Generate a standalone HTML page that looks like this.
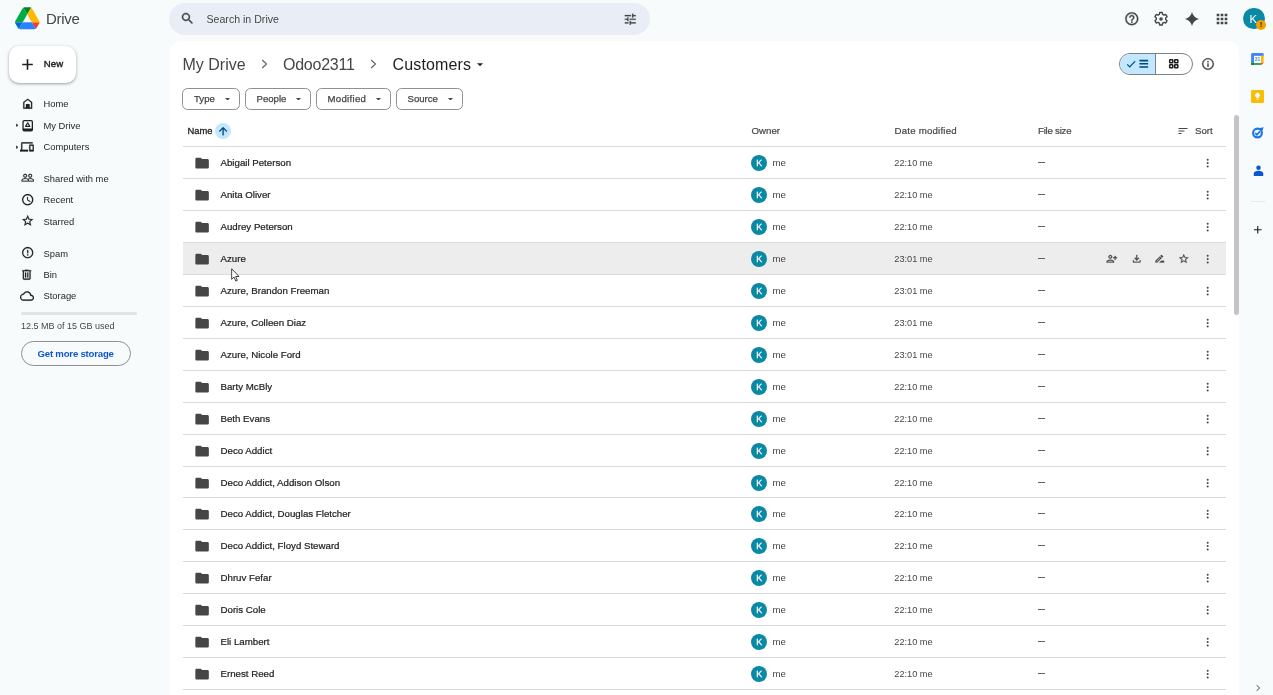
<!DOCTYPE html>
<html lang="en">
<head>
<meta charset="utf-8">
<title>Customers - Google Drive</title>
<style>
*{box-sizing:border-box;margin:0;padding:0}
html,body{width:1273px;height:695px;overflow:hidden;background:#f7fbfc;font-family:"Liberation Sans",Arial,sans-serif;color:#1f1f1f}
body{position:relative}
#wrap{position:absolute;left:0;top:0;width:1273px;height:695px;will-change:transform}
.abs{position:absolute}
svg{position:absolute;display:block}
.t{position:absolute;white-space:nowrap;line-height:1}
/* top bar */
#logo{left:15px;top:7px;width:24.500px;height:22.500px}
#drive{left:46px;top:11.400px;font-size:15px;color:#444746;letter-spacing:-0.3px}
#search{left:168.500px;top:3px;width:481px;height:32px;border-radius:16px;background:#e9eef6}
#searchtxt{left:206.500px;top:13.500px;font-size:10.600px;color:#444746}
.hi{fill:#444746}
/* new button */
#new{left:9px;top:46px;width:67px;height:36.500px;border-radius:10px;background:#fff;box-shadow:0 1px 2px rgba(60,64,67,.3),0 1px 3px 1px rgba(60,64,67,.15)}
#newtxt{left:43.700px;top:59.200px;font-size:9.600px;color:#1f1f1f;-webkit-text-stroke:.4px #1f1f1f;letter-spacing:0.1px}
/* sidebar */
.sb{font-size:9.400px;color:#1f1f1f;left:43.500px}
.si{stroke:#1f1f1f;stroke-width:.35;fill:#1f1f1f;width:13.400px;height:13.400px;left:20.500px}
#bar{left:21px;top:311.500px;width:116px;height:3px;border-radius:2px;background:#dfe3e7}
#used{left:21px;top:321.600px;font-size:9px;color:#444746}
#more{left:20.500px;top:341px;width:110.500px;height:25px;border:1px solid #8e918f;border-radius:13px}
#moretxt{left:37.500px;top:348.500px;font-size:9.600px;color:#0b57d0;font-weight:bold;letter-spacing:-0.2px}
/* main panel */
#main{left:170px;top:41px;width:1069px;height:660px;background:#fff;border-radius:11px 11px 0 0}
.bc{font-size:16px;color:#444746;top:57px}
.chip{position:absolute;top:88px;height:21.500px;border:1px solid #8e918f;border-radius:5.500px}
.ct{font-size:9.600px;color:#444746;top:94px;-webkit-text-stroke:0.25px #444746}
.car{fill:#444746}
.hd{font-size:9.700px;color:#444746;top:126px;-webkit-text-stroke:.2px #444746}
/* rows */
.row{position:absolute;left:183px;width:1042.500px;height:32.500px;border-top:1px solid #dadada}
.row.hov{background:#ededed}
.row.last{height:1px}
.fold{left:10.650px;top:7.600px;width:16.200px;height:16.200px;fill:#444746}
.row span{position:absolute;white-space:nowrap;line-height:1;font-size:9.700px}
.nm{left:37.500px;top:10.500px;color:#1f1f1f;-webkit-text-stroke:0.22px #1f1f1f}
.av{left:568.100px;top:7.700px;width:16.300px;height:16.300px;border-radius:50%;background:#0a89a6;color:#fff;font-size:8.800px!important;-webkit-text-stroke:.3px #fff;text-align:center;line-height:17px!important}
.me{left:589.500px;top:11.300px;color:#444746}
.dt{left:711.300px;top:11.500px;color:#444746;font-size:9.200px!important}
.sz{left:855px;top:15px;width:7.300px;height:1px;background:#5f6368}
.dots{left:1023px;top:10.500px;width:3.400px;height:10.200px;fill:#444746}
.act{top:9.500px;width:11.500px;height:11.500px;fill:#444746;stroke:#444746;stroke-width:.5}
/* scrollbar */
#scroll{left:1234px;top:114.500px;width:5px;height:200.500px;border-radius:3px;background:#c4c4c4}
</style>
</head>
<body>
<div id="wrap">
<!-- ===== top bar ===== -->
<svg id="logo" viewBox="0 0 87.300 78">
<path d="m6.600 66.850 3.850 6.650c.8 1.400 1.950 2.500 3.300 3.300l13.750-23.800h-27.500c0 1.550.4 3.100 1.200 4.500z" fill="#0066da"/>
<path d="m43.650 25-13.750-23.800c-1.350.8-2.500 1.900-3.300 3.300l-25.400 44a9.060 9.060 0 0 0 -1.200 4.500h27.500z" fill="#00ac47"/>
<path d="m73.550 76.800c1.350-.8 2.500-1.900 3.300-3.300l1.600-2.750 7.650-13.250c.8-1.400 1.200-2.950 1.200-4.500h-27.502l5.852 11.500z" fill="#ea4335"/>
<path d="m43.650 25 13.750-23.800c-1.350-.8-2.900-1.200-4.500-1.200h-18.500c-1.600 0-3.150.45-4.500 1.200z" fill="#00832d"/>
<path d="m59.800 53h-32.300l-13.750 23.800c1.350.8 2.900 1.200 4.500 1.200h50.800c1.600 0 3.150-.45 4.500-1.200z" fill="#2684fc"/>
<path d="m73.400 26.500-12.700-22c-.8-1.400-1.950-2.500-3.300-3.300l-13.750 23.800 16.150 28h27.450c0-1.550-.4-3.100-1.200-4.500z" fill="#ffba00"/>
</svg>
<div class="t" id="drive">Drive</div>
<div class="abs" id="search"></div>
<svg class="hi" style="left:180px;top:11.400px;width:15px;height:15px;stroke:#444746;stroke-width:.6" viewBox="0 0 24 24"><path d="M15.500 14h-.79l-.28-.27C15.410 12.590 16 11.110 16 9.500 16 5.910 13.090 3 9.500 3S3 5.910 3 9.500 5.910 16 9.500 16c1.610 0 3.090-.59 4.230-1.570l.27.280v.79l5 4.990L20.490 19l-4.990-5zm-6 0C7.010 14 5 11.990 5 9.500S7.010 5 9.500 5 14 7.010 14 9.500 11.990 14 9.500 14z"/></svg>
<div class="t" id="searchtxt">Search in Drive</div>
<svg class="hi" style="left:622.500px;top:12px;width:14.500px;height:14.500px;stroke:#444746;stroke-width:.4" viewBox="0 0 24 24"><path d="M3 17v2h6v-2H3zM3 5v2h10V5H3zm10 16v-2h8v-2h-8v-2h-2v6h2zM7 9v2H3v2h4v2h2V9H7zm14 4v-2H11v2h10zm-6-4h2V7h4V5h-4V3h-2v6z"/></svg>
<!-- right icons -->
<svg class="hi" style="left:1123.600px;top:11.100px;width:15.600px;height:15.600px;stroke:#444746;stroke-width:.5" viewBox="0 0 24 24"><path d="M11 18h2v-2h-2v2zm1-16C6.480 2 2 6.480 2 12s4.480 10 10 10 10-4.480 10-10S17.520 2 12 2zm0 18c-4.410 0-8-3.590-8-8s3.590-8 8-8 8 3.590 8 8-3.590 8-8 8zm0-14c-2.210 0-4 1.790-4 4h2c0-1.100.9-2 2-2s2 .9 2 2c0 2-3 1.750-3 5h2c0-2.250 3-2.500 3-5 0-2.210-1.790-4-4-4z"/></svg>
<svg style="left:1152.800px;top:10.900px;width:16px;height:16px" viewBox="-12 -12 24 24"><g fill="none" stroke="#444746" stroke-width="2.100" stroke-linejoin="round"><path d="M-1.900 -9.800h3.800l.55 2.750 2.100 1.200 2.650-.9 1.900 3.300-2.100 1.850v2.400l2.100 1.850-1.900 3.300-2.650-.9-2.100 1.200-.55 2.750h-3.800l-.55-2.750-2.100-1.200-2.650.9-1.900-3.300 2.100-1.850v-2.400l-2.100-1.850 1.900-3.300 2.650.9 2.100-1.200z"/></g><circle r="2.700" fill="#444746"/></svg>
<svg style="left:1185.200px;top:12.100px;width:14px;height:14px;fill:#444746" viewBox="0 0 24 24"><path d="M12 0C13.500 6.500 17.500 10.500 24 12 17.500 13.500 13.500 17.500 12 24 10.500 17.500 6.500 13.500 0 12 6.500 10.500 10.500 6.500 12 0z"/></svg>
<svg class="hi" style="left:1214.200px;top:10.900px;width:16px;height:16px" viewBox="0 0 24 24"><path d="M4 8h4V4H4v4zm6 12h4v-4h-4v4zm-6 0h4v-4H4v4zm0-6h4v-4H4v4zm6 0h4v-4h-4v4zm6-10v4h4V4h-4zm-6 4h4V4h-4v4zm6 6h4v-4h-4v4zm0 6h4v-4h-4v4z"/></svg>
<div class="abs" style="left:1243.200px;top:8px;width:21.400px;height:21.400px;border-radius:50%;background:#0a89a6"></div>
<div class="t" style="left:1249.500px;top:14.300px;font-size:11.300px;color:#fff">K</div>
<div class="abs" style="left:1256.100px;top:19.800px;width:10px;height:10px;border-radius:50%;background:#f2a000"></div>
<div class="t" style="left:1259.800px;top:20.800px;font-size:8px;font-weight:bold;color:#3c2a00">!</div>

<!-- ===== sidebar ===== -->
<div class="abs" id="new"></div>
<svg style="left:20px;top:56.500px;width:15px;height:15px;fill:#1f1f1f" viewBox="0 0 24 24"><path d="M20.500 13.300h-7.200v7.200h-2.600v-7.200H3.500v-2.600h7.200V3.500h2.600v7.200h7.200z"/></svg>
<div class="t" id="newtxt">New</div>

<svg class="si" style="top:96.9px" viewBox="0 0 24 24"><path d="M12 3L4 9v12h16V9l-8-6zm6 16h-3v-6H9v6H6v-9l6-4.500 6 4.500v9z"/><rect x="9" y="13" width="6" height="7"/></svg>
<div class="t sb" style="top:98.500px">Home</div>
<svg style="left:15.500px;top:123.400px;width:2.800px;height:4.400px;fill:#444746" viewBox="0 0 4 5"><path d="M0 0l4 2.500L0 5z"/></svg>
<svg class="si" style="top:118.700px;left:20.600px;stroke:none" viewBox="0 0 24 24"><rect x="3.650" y="2.850" width="16.700" height="18.300" rx="2.200" fill="none" stroke="#1f1f1f" stroke-width="2.300"/><rect x="3.650" y="17" width="16.700" height="4.200" fill="#1f1f1f"/><path d="M12 6.600l3.900 6.600H8.100z" fill="none" stroke="#1f1f1f" stroke-width="1.900" stroke-linejoin="round"/></svg>
<div class="t sb" style="top:121px">My Drive</div>
<svg style="left:15.500px;top:144.900px;width:2.800px;height:4.400px;fill:#444746" viewBox="0 0 4 5"><path d="M0 0l4 2.500L0 5z"/></svg>
<svg class="si" style="top:139.600px;left:20.400px;width:13.800px;height:13.800px" viewBox="0 0 24 24"><path d="M4 6h18V4H4c-1.100 0-2 .9-2 2v11H0v3h14v-3H4V6zm19 2h-6c-.55 0-1 .45-1 1v10c0 .55.450 1 1 1h6c.55 0 1-.45 1-1V9c0-.55-.45-1-1-1zm-1 9h-4v-7h4v7z"/></svg>
<div class="t sb" style="top:141.500px">Computers</div>

<svg class="si" style="top:171.4px" viewBox="0 0 24 24"><path d="M16.500 13c-1.200 0-3.070.34-4.500 1-1.430-.67-3.300-1-4.500-1C5.330 13 1 14.080 1 16.250V19h22v-2.750c0-2.170-4.330-3.250-6.500-3.250zm-4 4.500h-10v-1.250c0-.54 2.560-1.750 5-1.750s5 1.210 5 1.750v1.250zm9 0H14v-1.250c0-.46-.2-.86-.52-1.220.88-.3 1.960-.53 3.020-.53 2.440 0 5 1.210 5 1.750v1.250zM7.500 12c1.930 0 3.500-1.570 3.500-3.500S9.430 5 7.500 5 4 6.570 4 8.500 5.570 12 7.500 12zm0-5.500c1.100 0 2 .9 2 2s-.9 2-2 2-2-.9-2-2 .9-2 2-2zm9 5.500c1.930 0 3.500-1.570 3.500-3.500S18.430 5 16.500 5 13 6.570 13 8.500s1.570 3.500 3.500 3.500zm0-5.500c1.100 0 2 .9 2 2s-.9 2-2 2-2-.9-2-2 .9-2 2-2z"/></svg>
<div class="t sb" style="top:174px">Shared with me</div>
<svg class="si" style="top:192.9px" viewBox="0 0 24 24"><path d="M11.990 2C6.470 2 2 6.480 2 12s4.470 10 9.990 10C17.520 22 22 17.520 22 12S17.520 2 11.990 2zM12 20c-4.420 0-8-3.580-8-8s3.580-8 8-8 8 3.580 8 8-3.580 8-8 8zm.5-13H11v6l5.250 3.150.75-1.230-4.500-2.670z"/></svg>
<div class="t sb" style="top:194.500px">Recent</div>
<svg class="si" style="top:213.9px" viewBox="0 0 24 24"><path d="M22 9.240l-7.190-.62L12 2 9.190 8.630 2 9.240l5.460 4.730L5.820 21 12 17.270 18.180 21l-1.630-7.030L22 9.240zM12 15.400l-3.760 2.270 1-4.280-3.320-2.880 4.380-.38L12 6.100l1.710 4.040 4.380.38-3.320 2.880 1 4.280L12 15.400z"/></svg>
<div class="t sb" style="top:216.500px">Starred</div>

<svg class="si" style="top:245.9px" viewBox="0 0 24 24"><path d="M11 15h2v2h-2zm0-8h2v6h-2zm.99-5C6.470 2 2 6.480 2 12s4.470 10 9.990 10C17.520 22 22 17.520 22 12S17.520 2 11.990 2zM12 20c-4.420 0-8-3.580-8-8s3.580-8 8-8 8 3.580 8 8-3.580 8-8 8z"/></svg>
<div class="t sb" style="top:248.500px">Spam</div>
<svg class="si" style="top:268.200px;left:20.300px" viewBox="0 0 24 24"><path d="M15 4V3H9v1H4v2h1v13c0 1.100.9 2 2 2h10c1.100 0 2-.9 2-2V6h1V4h-5zm2 15H7V6h10v13zM9 8h2v9H9zm4 0h2v9h-2z"/></svg>
<div class="t sb" style="top:270px">Bin</div>
<svg class="si" style="top:289px;left:20.300px;width:14px;height:14px" viewBox="0 0 24 24"><path d="M19.350 10.040C18.670 6.590 15.640 4 12 4 9.110 4 6.600 5.640 5.350 8.040 2.340 8.360 0 10.910 0 14c0 3.310 2.690 6 6 6h13c2.760 0 5-2.240 5-5 0-2.640-2.050-4.780-4.650-4.960zM19 18H6c-2.210 0-4-1.790-4-4 0-2.050 1.530-3.760 3.560-3.970l1.070-.11.5-.95C8.080 7.140 9.940 6 12 6c2.620 0 4.880 1.860 5.390 4.430l.3 1.500 1.530.11c1.560.1 2.780 1.410 2.780 2.960 0 1.650-1.350 3-3 3z"/></svg>
<div class="t sb" style="top:290.500px">Storage</div>

<div class="abs" id="bar"></div>
<div class="t" id="used">12.5 MB of 15 GB used</div>
<div class="abs" id="more"></div>
<div class="t" id="moretxt">Get more storage</div>

<!-- ===== main panel ===== -->
<div class="abs" id="main"></div>
<div class="t bc" style="left:182.500px">My Drive</div>
<svg style="left:261px;top:59.300px;width:7px;height:10px;fill:none;stroke:#5f6368;stroke-width:1.150" viewBox="0 0 7 10"><path d="M1.200 1l4.300 4-4.300 4"/></svg>
<div class="t bc" style="left:283px;letter-spacing:-0.25px">Odoo2311</div>
<svg style="left:370.200px;top:59.300px;width:7px;height:10px;fill:none;stroke:#5f6368;stroke-width:1.150" viewBox="0 0 7 10"><path d="M1.200 1l4.300 4-4.300 4"/></svg>
<div class="t bc" style="left:392.500px;color:#1f1f1f;letter-spacing:0.15px">Customers</div>
<svg style="left:477px;top:62.800px;width:6.200px;height:3.400px;fill:#1f1f1f" viewBox="0 0 10 5"><path d="M0 0h10L5 5z"/></svg>

<!-- view toggle -->
<div class="abs" style="left:1118.600px;top:53px;width:74px;height:22px;border:1px solid #7c8185;border-radius:11px;overflow:hidden"><div class="abs" style="left:0;top:0;width:36.500px;height:20px;background:#c2e7ff;border-right:1px solid #7c8185"></div></div>
<svg style="left:1125.800px;top:59px;width:10px;height:10px;fill:none;stroke:#004a77;stroke-width:2.800" viewBox="0 0 24 24"><path d="M3 13l6 6L22 5"/></svg>
<svg style="left:1138.300px;top:58.200px;width:11.600px;height:11.600px;fill:#004a77" viewBox="0 0 24 24"><path d="M3 3.800h18v3.200H3zm0 6.600h18v3.200H3zm0 6.600h18v3.200H3z"/></svg>
<svg style="left:1167.500px;top:58.100px;width:11.500px;height:11.500px;fill:none;stroke:#1f1f1f;stroke-width:3.200" viewBox="0 0 24 24"><rect x="3.500" y="3.500" width="6.500" height="6.500" rx="1"/><rect x="14" y="3.500" width="6.500" height="6.500" rx="1"/><rect x="3.500" y="14" width="6.500" height="6.500" rx="1"/><rect x="14" y="14" width="6.500" height="6.500" rx="1"/></svg>
<svg class="hi" style="left:1201px;top:57.200px;width:14px;height:14px;stroke:#444746;stroke-width:.5" viewBox="0 0 24 24"><path d="M11 7h2v2h-2zm0 4h2v6h-2zm1-9C6.480 2 2 6.480 2 12s4.480 10 10 10 10-4.480 10-10S17.520 2 12 2zm0 18c-4.410 0-8-3.590-8-8s3.590-8 8-8 8 3.590 8 8-3.590 8-8 8z"/></svg>

<!-- chips -->
<div class="chip" style="left:182px;width:58px"></div>
<div class="t ct" style="left:194px">Type</div>
<svg class="car" style="left:225px;top:97.500px;width:5px;height:2.700px" viewBox="0 0 10 5"><path d="M0 0h10L5 5z"/></svg>
<div class="chip" style="left:245px;width:66px"></div>
<div class="t ct" style="left:256.500px">People</div>
<svg class="car" style="left:296px;top:97.500px;width:5px;height:2.700px" viewBox="0 0 10 5"><path d="M0 0h10L5 5z"/></svg>
<div class="chip" style="left:316px;width:75px"></div>
<div class="t ct" style="left:327.500px;letter-spacing:0.3px">Modified</div>
<svg class="car" style="left:376px;top:97.500px;width:5px;height:2.700px" viewBox="0 0 10 5"><path d="M0 0h10L5 5z"/></svg>
<div class="chip" style="left:396px;width:67px"></div>
<div class="t ct" style="left:407.500px">Source</div>
<svg class="car" style="left:448px;top:97.500px;width:5px;height:2.700px" viewBox="0 0 10 5"><path d="M0 0h10L5 5z"/></svg>

<!-- column headers -->
<div class="t hd" style="left:187.500px;color:#1f1f1f;font-size:9.400px;-webkit-text-stroke:0.3px #1f1f1f">Name</div>
<div class="abs" style="left:215px;top:123px;width:16px;height:16px;border-radius:50%;background:#c2e7ff"></div>
<svg style="left:216.900px;top:124.800px;width:12.200px;height:12.200px;fill:#004a77;stroke:#004a77;stroke-width:.7" viewBox="0 0 24 24"><path d="M4 12l1.410 1.410L11 7.830V20h2V7.830l5.580 5.590L20 12l-8-8-8 8z"/></svg>
<div class="t hd" style="left:751.500px">Owner</div>
<div class="t hd" style="left:894.500px;letter-spacing:0.2px">Date modified</div>
<div class="t hd" style="left:1038px;letter-spacing:-0.25px">File size</div>
<svg class="hi" style="left:1177px;top:125px;width:12px;height:12px" viewBox="0 0 24 24"><path d="M3 18h6v-2H3v2zM3 6v2h18V6H3zm0 7h12v-2H3v2z"/></svg>
<div class="t hd" style="left:1195px">Sort</div>

<div class="row" style="top:146px"><svg class="fold" viewBox="0 0 24 24"><path d="M10 4H4c-1.1 0-2 .9-2 2v12c0 1.100.9 2 2 2h16c1.100 0 2-.9 2-2V8c0-1.100-.9-2-2-2h-8l-2-2z"/></svg><span class="nm">Abigail Peterson</span><span class="av">K</span><span class="me">me</span><span class="dt">22:10 me</span><span class="sz"></span><svg class="dots" viewBox="0 0 4 12"><circle cx="2" cy="2" r="1.2"/><circle cx="2" cy="6" r="1.2"/><circle cx="2" cy="10" r="1.2"/></svg></div>
<div class="row" style="top:178px"><svg class="fold" viewBox="0 0 24 24"><path d="M10 4H4c-1.1 0-2 .9-2 2v12c0 1.100.9 2 2 2h16c1.100 0 2-.9 2-2V8c0-1.100-.9-2-2-2h-8l-2-2z"/></svg><span class="nm">Anita Oliver</span><span class="av">K</span><span class="me">me</span><span class="dt">22:10 me</span><span class="sz"></span><svg class="dots" viewBox="0 0 4 12"><circle cx="2" cy="2" r="1.2"/><circle cx="2" cy="6" r="1.2"/><circle cx="2" cy="10" r="1.2"/></svg></div>
<div class="row" style="top:210px"><svg class="fold" viewBox="0 0 24 24"><path d="M10 4H4c-1.1 0-2 .9-2 2v12c0 1.100.9 2 2 2h16c1.100 0 2-.9 2-2V8c0-1.100-.9-2-2-2h-8l-2-2z"/></svg><span class="nm">Audrey Peterson</span><span class="av">K</span><span class="me">me</span><span class="dt">22:10 me</span><span class="sz"></span><svg class="dots" viewBox="0 0 4 12"><circle cx="2" cy="2" r="1.2"/><circle cx="2" cy="6" r="1.2"/><circle cx="2" cy="10" r="1.2"/></svg></div>
<div class="row hov" style="top:242px"><svg class="fold" viewBox="0 0 24 24"><path d="M10 4H4c-1.1 0-2 .9-2 2v12c0 1.100.9 2 2 2h16c1.100 0 2-.9 2-2V8c0-1.100-.9-2-2-2h-8l-2-2z"/></svg><span class="nm">Azure</span><span class="av">K</span><span class="me">me</span><span class="dt">23:01 me</span><span class="sz"></span><svg class="act" style="left:923.400px" viewBox="0 0 24 24"><path d="M9 12c2.210 0 4-1.790 4-4s-1.790-4-4-4-4 1.790-4 4 1.790 4 4 4zm0-6c1.100 0 2 .9 2 2s-.9 2-2 2-2-.9-2-2 .9-2 2-2zm0 8c-2.670 0-8 1.340-8 4v2h16v-2c0-2.660-5.330-4-8-4zm6 4H3v-.01C3.200 17.290 6.300 16 9 16s5.800 1.290 6 2zM20 9V6h-2v3h-3v2h3v3h2v-3h3V9h-3z"/></svg>
<svg class="act" style="left:947.500px" viewBox="0 0 24 24"><path d="M18 15v3H6v-3H4v3c0 1.100.9 2 2 2h12c1.100 0 2-.9 2-2v-3h-2zm-1-4l-1.410-1.410L13 12.170V4h-2v8.170L8.410 9.590 7 11l5 5 5-5z"/></svg>
<svg class="act" style="left:971.300px" viewBox="0 0 24 24"><path d="M15 16l-4 4h10v-4h-6zM12.060 7.190L3 16.250V20h3.750l9.060-9.060-3.750-3.750zM5.920 18H5v-.92l7.060-7.060.92.920L5.920 18zM18.710 8.040c.39-.39.39-1.020 0-1.410l-2.340-2.340c-.2-.2-.45-.29-.71-.29-.25 0-.51.100-.7.290l-1.830 1.830 3.750 3.750 1.830-1.830z"/></svg>
<svg class="act" style="left:995.300px" viewBox="0 0 24 24"><path d="M22 9.240l-7.190-.62L12 2 9.190 8.630 2 9.240l5.460 4.730L5.820 21 12 17.270 18.180 21l-1.630-7.030L22 9.240zM12 15.400l-3.760 2.270 1-4.280-3.320-2.880 4.380-.38L12 6.100l1.710 4.040 4.380.38-3.320 2.880 1 4.280L12 15.400z"/></svg><svg class="dots" viewBox="0 0 4 12"><circle cx="2" cy="2" r="1.2"/><circle cx="2" cy="6" r="1.2"/><circle cx="2" cy="10" r="1.2"/></svg></div>
<div class="row" style="top:274px"><svg class="fold" viewBox="0 0 24 24"><path d="M10 4H4c-1.1 0-2 .9-2 2v12c0 1.100.9 2 2 2h16c1.100 0 2-.9 2-2V8c0-1.100-.9-2-2-2h-8l-2-2z"/></svg><span class="nm">Azure, Brandon Freeman</span><span class="av">K</span><span class="me">me</span><span class="dt">23:01 me</span><span class="sz"></span><svg class="dots" viewBox="0 0 4 12"><circle cx="2" cy="2" r="1.2"/><circle cx="2" cy="6" r="1.2"/><circle cx="2" cy="10" r="1.2"/></svg></div>
<div class="row" style="top:306px"><svg class="fold" viewBox="0 0 24 24"><path d="M10 4H4c-1.1 0-2 .9-2 2v12c0 1.100.9 2 2 2h16c1.100 0 2-.9 2-2V8c0-1.100-.9-2-2-2h-8l-2-2z"/></svg><span class="nm">Azure, Colleen Diaz</span><span class="av">K</span><span class="me">me</span><span class="dt">23:01 me</span><span class="sz"></span><svg class="dots" viewBox="0 0 4 12"><circle cx="2" cy="2" r="1.2"/><circle cx="2" cy="6" r="1.2"/><circle cx="2" cy="10" r="1.2"/></svg></div>
<div class="row" style="top:338px"><svg class="fold" viewBox="0 0 24 24"><path d="M10 4H4c-1.1 0-2 .9-2 2v12c0 1.100.9 2 2 2h16c1.100 0 2-.9 2-2V8c0-1.100-.9-2-2-2h-8l-2-2z"/></svg><span class="nm">Azure, Nicole Ford</span><span class="av">K</span><span class="me">me</span><span class="dt">23:01 me</span><span class="sz"></span><svg class="dots" viewBox="0 0 4 12"><circle cx="2" cy="2" r="1.2"/><circle cx="2" cy="6" r="1.2"/><circle cx="2" cy="10" r="1.2"/></svg></div>
<div class="row" style="top:370px"><svg class="fold" viewBox="0 0 24 24"><path d="M10 4H4c-1.1 0-2 .9-2 2v12c0 1.100.9 2 2 2h16c1.100 0 2-.9 2-2V8c0-1.100-.9-2-2-2h-8l-2-2z"/></svg><span class="nm">Barty McBly</span><span class="av">K</span><span class="me">me</span><span class="dt">22:10 me</span><span class="sz"></span><svg class="dots" viewBox="0 0 4 12"><circle cx="2" cy="2" r="1.2"/><circle cx="2" cy="6" r="1.2"/><circle cx="2" cy="10" r="1.2"/></svg></div>
<div class="row" style="top:402px"><svg class="fold" viewBox="0 0 24 24"><path d="M10 4H4c-1.1 0-2 .9-2 2v12c0 1.100.9 2 2 2h16c1.100 0 2-.9 2-2V8c0-1.100-.9-2-2-2h-8l-2-2z"/></svg><span class="nm">Beth Evans</span><span class="av">K</span><span class="me">me</span><span class="dt">22:10 me</span><span class="sz"></span><svg class="dots" viewBox="0 0 4 12"><circle cx="2" cy="2" r="1.2"/><circle cx="2" cy="6" r="1.2"/><circle cx="2" cy="10" r="1.2"/></svg></div>
<div class="row" style="top:434px"><svg class="fold" viewBox="0 0 24 24"><path d="M10 4H4c-1.1 0-2 .9-2 2v12c0 1.100.9 2 2 2h16c1.100 0 2-.9 2-2V8c0-1.100-.9-2-2-2h-8l-2-2z"/></svg><span class="nm">Deco Addict</span><span class="av">K</span><span class="me">me</span><span class="dt">22:10 me</span><span class="sz"></span><svg class="dots" viewBox="0 0 4 12"><circle cx="2" cy="2" r="1.2"/><circle cx="2" cy="6" r="1.2"/><circle cx="2" cy="10" r="1.2"/></svg></div>
<div class="row" style="top:466px"><svg class="fold" viewBox="0 0 24 24"><path d="M10 4H4c-1.1 0-2 .9-2 2v12c0 1.100.9 2 2 2h16c1.100 0 2-.9 2-2V8c0-1.100-.9-2-2-2h-8l-2-2z"/></svg><span class="nm">Deco Addict, Addison Olson</span><span class="av">K</span><span class="me">me</span><span class="dt">22:10 me</span><span class="sz"></span><svg class="dots" viewBox="0 0 4 12"><circle cx="2" cy="2" r="1.2"/><circle cx="2" cy="6" r="1.2"/><circle cx="2" cy="10" r="1.2"/></svg></div>
<div class="row" style="top:497px"><svg class="fold" viewBox="0 0 24 24"><path d="M10 4H4c-1.1 0-2 .9-2 2v12c0 1.100.9 2 2 2h16c1.100 0 2-.9 2-2V8c0-1.100-.9-2-2-2h-8l-2-2z"/></svg><span class="nm">Deco Addict, Douglas Fletcher</span><span class="av">K</span><span class="me">me</span><span class="dt">22:10 me</span><span class="sz"></span><svg class="dots" viewBox="0 0 4 12"><circle cx="2" cy="2" r="1.2"/><circle cx="2" cy="6" r="1.2"/><circle cx="2" cy="10" r="1.2"/></svg></div>
<div class="row" style="top:529px"><svg class="fold" viewBox="0 0 24 24"><path d="M10 4H4c-1.1 0-2 .9-2 2v12c0 1.100.9 2 2 2h16c1.100 0 2-.9 2-2V8c0-1.100-.9-2-2-2h-8l-2-2z"/></svg><span class="nm">Deco Addict, Floyd Steward</span><span class="av">K</span><span class="me">me</span><span class="dt">22:10 me</span><span class="sz"></span><svg class="dots" viewBox="0 0 4 12"><circle cx="2" cy="2" r="1.2"/><circle cx="2" cy="6" r="1.2"/><circle cx="2" cy="10" r="1.2"/></svg></div>
<div class="row" style="top:561px"><svg class="fold" viewBox="0 0 24 24"><path d="M10 4H4c-1.1 0-2 .9-2 2v12c0 1.100.9 2 2 2h16c1.100 0 2-.9 2-2V8c0-1.100-.9-2-2-2h-8l-2-2z"/></svg><span class="nm">Dhruv Fefar</span><span class="av">K</span><span class="me">me</span><span class="dt">22:10 me</span><span class="sz"></span><svg class="dots" viewBox="0 0 4 12"><circle cx="2" cy="2" r="1.2"/><circle cx="2" cy="6" r="1.2"/><circle cx="2" cy="10" r="1.2"/></svg></div>
<div class="row" style="top:593px"><svg class="fold" viewBox="0 0 24 24"><path d="M10 4H4c-1.1 0-2 .9-2 2v12c0 1.100.9 2 2 2h16c1.100 0 2-.9 2-2V8c0-1.100-.9-2-2-2h-8l-2-2z"/></svg><span class="nm">Doris Cole</span><span class="av">K</span><span class="me">me</span><span class="dt">22:10 me</span><span class="sz"></span><svg class="dots" viewBox="0 0 4 12"><circle cx="2" cy="2" r="1.2"/><circle cx="2" cy="6" r="1.2"/><circle cx="2" cy="10" r="1.2"/></svg></div>
<div class="row" style="top:625px"><svg class="fold" viewBox="0 0 24 24"><path d="M10 4H4c-1.1 0-2 .9-2 2v12c0 1.100.9 2 2 2h16c1.100 0 2-.9 2-2V8c0-1.100-.9-2-2-2h-8l-2-2z"/></svg><span class="nm">Eli Lambert</span><span class="av">K</span><span class="me">me</span><span class="dt">22:10 me</span><span class="sz"></span><svg class="dots" viewBox="0 0 4 12"><circle cx="2" cy="2" r="1.2"/><circle cx="2" cy="6" r="1.2"/><circle cx="2" cy="10" r="1.2"/></svg></div>
<div class="row" style="top:657px"><svg class="fold" viewBox="0 0 24 24"><path d="M10 4H4c-1.1 0-2 .9-2 2v12c0 1.100.9 2 2 2h16c1.100 0 2-.9 2-2V8c0-1.100-.9-2-2-2h-8l-2-2z"/></svg><span class="nm">Ernest Reed</span><span class="av">K</span><span class="me">me</span><span class="dt">22:10 me</span><span class="sz"></span><svg class="dots" viewBox="0 0 4 12"><circle cx="2" cy="2" r="1.2"/><circle cx="2" cy="6" r="1.2"/><circle cx="2" cy="10" r="1.2"/></svg></div>
<div class="row last" style="top:689px"></div>

<div class="abs" id="scroll"></div>

<!-- cursor -->
<svg style="left:231.400px;top:267.500px;width:9.500px;height:14.500px" viewBox="0 0 10 15"><path d="M0.700 0.700v11l2.500-2.300 1.800 4.200 1.700-.7-1.800-4.100h3.500z" fill="#fff" stroke="#222" stroke-width="0.900" stroke-linejoin="round"/></svg>

<!-- ===== right side panel ===== -->
<svg style="left:1251.300px;top:52.600px;width:12.800px;height:12.600px" viewBox="0 0 24 24"><path d="M0 2.500A2.500 2.500 0 0 1 2.500 0h19A2.500 2.500 0 0 1 24 2.500V6H0z" fill="#4285f4"/><rect x="0" y="5" width="5.500" height="14" fill="#4285f4"/><rect x="18.500" y="5" width="5.500" height="13.500" fill="#fbbc04"/><path d="M5.500 18.500h13V24h-13z" fill="#34a853"/><path d="M0 18.500h5.500V24h-3A2.500 2.500 0 0 1 0 21.500z" fill="#188038"/><path d="M18.500 18.500H24L18.500 24z" fill="#ea4335"/><rect x="5.500" y="5.500" width="13" height="13" fill="#fff"/><text x="12" y="15.700" font-size="9.500" font-weight="bold" text-anchor="middle" fill="#4285f4" font-family="Liberation Sans,sans-serif">31</text></svg>
<svg style="left:1251px;top:89.500px;width:13px;height:13px" viewBox="0 0 24 24"><rect x="0" y="0" width="24" height="24" rx="2.500" fill="#fbbc04"/><path d="M12 5a4.500 4.500 0 0 0-2.500 8.240V15h5v-1.760A4.500 4.500 0 0 0 12 5zm-2 11.500h4V18h-4z" fill="#fff"/></svg>
<svg style="left:1251px;top:126.100px;width:13.500px;height:13.500px" viewBox="0 0 24 24"><circle cx="11.500" cy="12.500" r="7.800" fill="none" stroke="#1a73e8" stroke-width="3.800"/><path d="M7.500 12.500l3 3 5.500-6" fill="none" stroke="#1a73e8" stroke-width="3"/><path d="M15 3.500L22.500 2 20 9z" fill="#1a73e8"/></svg>
<svg style="left:1252.500px;top:164.500px;width:11px;height:12px" viewBox="0 0 22 24"><circle cx="11" cy="5.500" r="4.500" fill="#0b57d0"/><path d="M1.500 22v-5c0-3.500 4.500-5.500 9.500-5.500s9.500 2 9.500 5.500v5z" fill="#0b57d0"/></svg>
<div class="abs" style="left:1251px;top:200.500px;width:14px;height:1px;background:#e6e9ee"></div>
<svg style="left:1252.100px;top:224px;width:11.500px;height:11.500px;fill:#1f1f1f" viewBox="0 0 24 24"><path d="M20 13.200h-6.800V20h-2.400v-6.800H4v-2.400h6.800V4h2.400v6.800H20z"/></svg>
<svg style="left:1254px;top:684.200px;width:8px;height:8px;fill:none;stroke:#444746;stroke-width:3" viewBox="0 0 24 24"><path d="M8 4l9 8-9 8"/></svg>
</div>
</body>
</html>
